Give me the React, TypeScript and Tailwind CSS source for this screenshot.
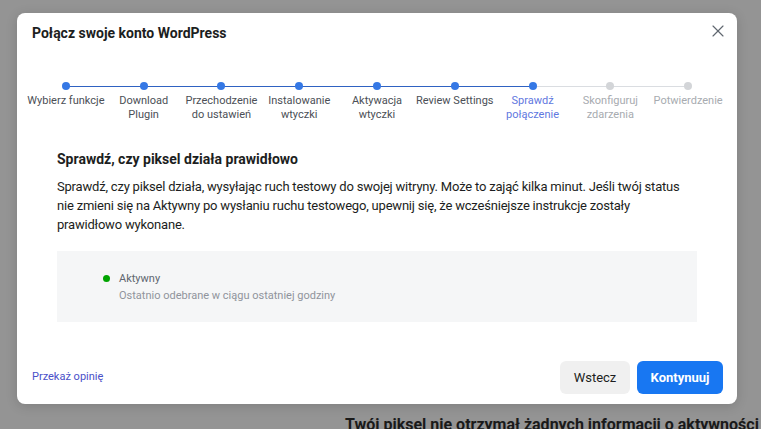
import { X } from 'lucide-react';

const steps = [
  { label: 'Wybierz funkcje', state: 'done' },
  { label: 'Download Plugin', state: 'done' },
  { label: 'Przechodzenie do ustawień', state: 'done' },
  { label: 'Instalowanie wtyczki', state: 'done' },
  { label: 'Aktywacja wtyczki', state: 'done' },
  { label: 'Review Settings', state: 'done' },
  { label: 'Sprawdź połączenie', state: 'active' },
  { label: 'Skonfiguruj zdarzenia', state: 'todo' },
  { label: 'Potwierdzenie', state: 'todo' },
];

function Stepper() {
  return (
    <div className="grid grid-cols-9 px-[10px]">
      {steps.map((step, i) => {
        const leftDone = step.state !== 'todo';
        const rightDone = step.state === 'done';
        return (
          <div className="flex flex-col items-center" key={step.label}>
            <div className="relative flex h-2 w-full items-center justify-center">
              {i > 0 && (
                <div
                  className={`absolute left-0 right-1/2 top-[3.5px] h-px ${
                    leftDone ? 'bg-[#2f62c2]' : 'bg-[#dadde1]'
                  }`}
                />
              )}
              {i < steps.length - 1 && (
                <div
                  className={`absolute left-1/2 right-0 top-[3.5px] h-px ${
                    rightDone ? 'bg-[#2f62c2]' : 'bg-[#dadde1]'
                  }`}
                />
              )}
              <div
                className={`relative size-2 rounded-full ${
                  step.state === 'todo' ? 'bg-[#d3d5d8]' : 'bg-[#3578e5]'
                }`}
              />
            </div>
            <div
              className={`mt-[4px] text-center text-[11px] leading-[14px] ${
                step.state === 'done'
                  ? 'text-[#4b4f56]'
                  : step.state === 'active'
                    ? 'text-[#5f78e0]'
                    : 'text-[#a7abb0]'
              }`}
            >
              {step.label}
            </div>
          </div>
        );
      })}
    </div>
  );
}

export default function App() {
  return (
    <div
      className="h-[429px] w-[761px] overflow-hidden bg-[#949494] pl-[17px] pt-[13px]"
      style={{ fontFamily: 'Roboto, "Noto Sans", sans-serif' }}
    >
      <div className="flex h-[391px] w-[720px] flex-col rounded-lg bg-white shadow-[0_2px_12px_rgba(0,0,0,0.15)]">
        <div className="flex items-start justify-between pl-[15px] pr-[9px] pt-[10px]">
          <h1 className="text-[14px] font-bold leading-5 text-[#1c1e21]">
            Połącz swoje konto WordPress
          </h1>
          <button className="-mt-[2px] text-[#606770]" type="button">
            <X className="size-[20px]" strokeWidth={1.4} />
          </button>
        </div>

        <div className="mt-[39px]">
          <Stepper />
        </div>

        <div className="px-10 pt-[27px]">
          <h2 className="text-[14px] font-bold leading-5 text-[#1c1e21]">
            Sprawdź, czy piksel działa prawidłowo
          </h2>
          <p className="mt-[8px] w-[640px] text-[13px] leading-[19px] tracking-[-0.2px] text-[#1c1e21]">
            Sprawdź, czy piksel działa, wysyłając ruch testowy do swojej
            witryny. Może to zająć kilka minut. Jeśli twój status nie zmieni się
            na Aktywny po wysłaniu ruchu testowego, upewnij się, że
            wcześniejsze instrukcje zostały prawidłowo wykonane.
          </p>
          <div className="mt-[17px] flex h-[71px] w-[640px] items-start gap-[9px] bg-[#f5f6f7] pl-[46px] pt-[19px]">
            <div className="mt-[5px] size-[7px] rounded-full bg-[#00a400]" />
            <div className="text-[11px] leading-[17px]">
              <div className="text-[#606770]">Aktywny</div>
              <div className="text-[#90949c]">
                Ostatnio odebrane w ciągu ostatniej godziny
              </div>
            </div>
          </div>
        </div>

        <div className="mt-auto flex items-center justify-between pb-[10px] pl-[15px] pr-[14px]">
          <a className="text-[11px] text-[#4a50c8]" href="#">
            Przekaż opinię
          </a>
          <div className="flex gap-[7px]">
            <button
              className="h-[33px] w-[70px] rounded-md bg-[#f0f0f0] text-[13px] text-[#1c1e21]"
              type="button"
            >
              Wstecz
            </button>
            <button
              className="h-[33px] w-[86px] rounded-md bg-[#1877f2] text-[13px] font-bold text-white"
              type="button"
            >
              Kontynuuj
            </button>
          </div>
        </div>
      </div>
      <div className="mt-[11px] whitespace-nowrap pl-[328px] text-[16px] font-bold leading-5 text-[#1a1a1a]">
        Twój piksel nie otrzymał żadnych informacji o aktywności
      </div>
    </div>
  );
}
